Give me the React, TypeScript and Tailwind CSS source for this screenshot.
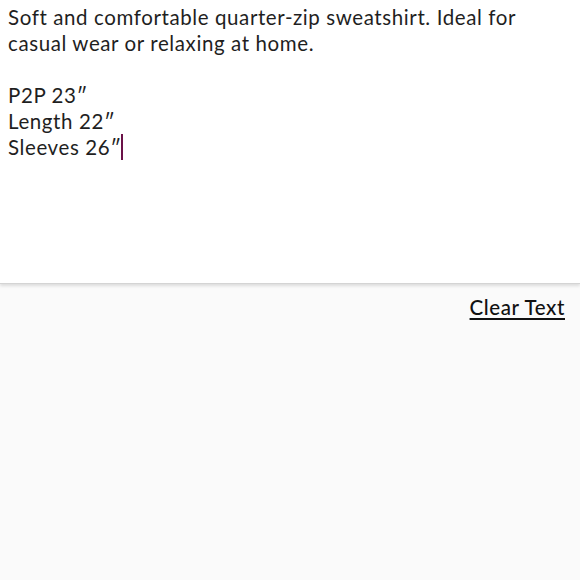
export default function App() {
    return (
        <div className="w-[580px] h-[580px] flex flex-col bg-[#fafafa] text-[#1f1f1f]" style={{ fontFamily: "Lato, 'Open Sans', sans-serif" }}>
            <div className="h-[284px] bg-white px-2 pt-[4px] text-[20.5px] leading-[26px] tracking-[0.6px] whitespace-pre-wrap border-b border-[#d4d4d4] shadow-[0_2px_3px_rgba(0,0,0,0.12)]">
                {"Soft and comfortable quarter-zip sweatshirt. Ideal for\ncasual wear or relaxing at home.\n\nP2P 23\u2033\nLength 22\u2033\nSleeves 26\u2033"}
                <span className="inline-block -ml-[1px] align-[-5px] w-[2px] h-[26px] bg-[#6b1248]" />
            </div>
            <div className="flex justify-end pr-[15px] pt-[8px]">
                <button className="text-[20.5px] tracking-[0.6px] font-medium underline underline-offset-[3px] decoration-[1.5px] text-[#111]">Clear Text</button>
            </div>
        </div>
    );
}
